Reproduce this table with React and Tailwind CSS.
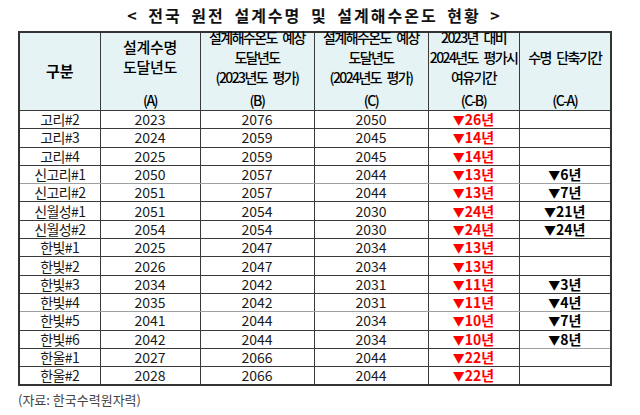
import React from "react";

const rows = [
  ["고리#2", "2023", "2076", "2050", "26", ""],
  ["고리#3", "2024", "2059", "2045", "14", ""],
  ["고리#4", "2025", "2059", "2045", "14", ""],
  ["신고리#1", "2050", "2057", "2044", "13", "6"],
  ["신고리#2", "2051", "2057", "2044", "13", "7"],
  ["신월성#1", "2051", "2054", "2030", "24", "21"],
  ["신월성#2", "2054", "2054", "2030", "24", "24"],
  ["한빛#1", "2025", "2047", "2034", "13", ""],
  ["한빛#2", "2026", "2047", "2034", "13", ""],
  ["한빛#3", "2034", "2042", "2031", "11", "3"],
  ["한빛#4", "2035", "2042", "2031", "11", "4"],
  ["한빛#5", "2041", "2044", "2034", "10", "7"],
  ["한빛#6", "2042", "2044", "2034", "10", "8"],
  ["한울#1", "2027", "2066", "2044", "22", ""],
  ["한울#2", "2028", "2066", "2044", "22", ""],
];

const font = { fontFamily: '"Noto Sans CJK KR", "Noto Sans", sans-serif' };

function Head({ lines, code, squeeze }) {
  return (
    <th className="border border-[#3a3a3a] bg-[#e5f3f5] p-0 align-top font-medium text-black">
      <div className="flex h-[77px] flex-col">
        <div
          className={
            "flex h-[56px] flex-col items-center justify-center pb-[8px] leading-[20px] " +
            (squeeze ? "text-[14px] tracking-[-1.6px] [word-spacing:4px]" : "text-[15px] tracking-[-0.3px]")
          }
        >
          {lines.map((l, i) => (
            <span key={i} className="whitespace-nowrap">
              {l}
            </span>
          ))}
        </div>
        <div className="flex h-[21px] items-center justify-center text-[14px] leading-[20px] tracking-[-1.5px]">
          {code}
        </div>
      </div>
    </th>
  );
}

export default function App() {
  return (
    <div className="relative h-[415px] w-[640px] bg-white" style={font}>
      <div className="flex h-[31px] items-start justify-center pt-[5px] pr-[11px]">
        <span className="text-[16px] font-bold leading-[20px] tracking-[2px] text-[#111] [word-spacing:4px]">
          {"< 전국 원전 설계수명 및 설계해수온도 현황 >"}
        </span>
      </div>
      <div className="pl-[18px]">
        <table className="w-[592px] table-fixed border-collapse border-2 border-[#333]">
          <colgroup>
            <col className="w-[81px]" />
            <col className="w-[100px]" />
            <col className="w-[114px]" />
            <col className="w-[114px]" />
            <col className="w-[91px]" />
            <col className="w-[92px]" />
          </colgroup>
          <thead>
            <tr>
              <th className="border border-[#3a3a3a] bg-[#e5f3f5] p-0 text-[15px] font-semibold text-black">
                구분
              </th>
              <Head lines={["설계수명", "도달년도"]} code="(A)" />
              <Head lines={["설계해수온도 예상", "도달년도", "(2023년도 평가)"]} code="(B)" squeeze />
              <Head lines={["설계해수온도 예상", "도달년도", "(2024년도 평가)"]} code="(C)" squeeze />
              <Head lines={["2023년 대비", "2024년도 평가시", "여유기간"]} code="(C-B)" squeeze />
              <Head lines={["수명 단축기간"]} code="(C-A)" squeeze />
            </tr>
          </thead>
          <tbody>
            {rows.map((r, i) => {
              const light = i === 3 || i === 10;
              const bc = light ? "border-b-[#a0a0a0]" : "border-b-[#3a3a3a]";
              const lastLight = light || i === 12;
              const lbc = lastLight ? "border-b-[#a0a0a0]" : "border-b-[#3a3a3a]";
              return (
                <tr key={i} className="h-[18.3px] text-[14px] leading-[17px] text-[#1a1a1a]">
                  <td className={"border border-[#3a3a3a] p-0 text-center tracking-[-0.6px] " + bc}>{r[0]}</td>
                  <td className={"border border-[#3a3a3a] p-0 text-center " + bc}>{r[1]}</td>
                  <td className={"border border-[#3a3a3a] p-0 text-center " + bc}>{r[2]}</td>
                  <td className={"border border-[#3a3a3a] p-0 text-center " + bc}>{r[3]}</td>
                  <td className={"border border-[#3a3a3a] p-0 text-center font-bold text-[#ff0000] " + bc}>
                    <span className="text-[12px]">▼</span>
                    {r[4]}년
                  </td>
                  <td className={"border border-[#3a3a3a] p-0 text-center font-bold text-black " + lbc}>
                    {r[5] ? (
                      <>
                        <span className="text-[12px]">▼</span>
                        {r[5]}년
                      </>
                    ) : null}
                  </td>
                </tr>
              );
            })}
          </tbody>
        </table>
      </div>
      <div className="pl-[18px] pt-[6px] text-[13px] leading-[16px] text-[#444]">(자료: 한국수력원자력)</div>
    </div>
  );
}
